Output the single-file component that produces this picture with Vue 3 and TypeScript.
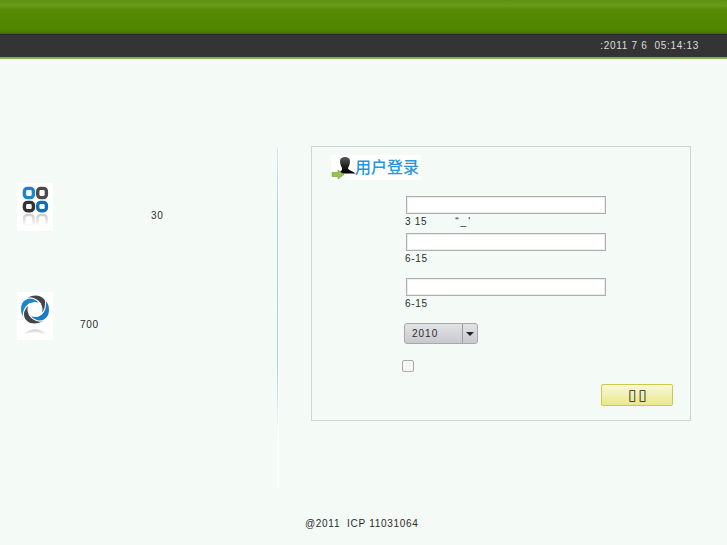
<script setup lang="ts">
const features = [
  { id: 'apps', text: '30', indent: 98 },
  { id: 'swirl', text: '700', indent: 27 },
]
const blades = [
  { angle: 90, color: '#454545' },
  { angle: 0, color: '#1b86cc' },
  { angle: 270, color: '#454545' },
  { angle: 180, color: '#1b7cc0' },
]
</script>

<template>
  <div class="page">
    <header class="top"></header>
    <div class="bar"><span>:2011 7 6&nbsp;&nbsp;05:14:13</span></div>
    <main class="main">
      <section class="left">
        <div v-for="f in features" :key="f.id" class="feature">
          <div class="thumb">
            <svg v-if="f.id === 'apps'" width="36" height="48" viewBox="0 0 36 48">
              <defs>
                <linearGradient id="fade-a" x1="0" y1="0" x2="0" y2="1">
                  <stop offset="0" stop-color="#cfcfcf" />
                  <stop offset="1" stop-color="#fff" />
                </linearGradient>
              </defs>
              <g fill="none" stroke-width="3.400">
                <rect x="7.400" y="5.400" width="9" height="9.200" rx="3" stroke="#1487cf" />
                <rect x="20.700" y="5.400" width="8.700" height="9.200" rx="3" stroke="#4a4a4a" />
                <rect x="7.400" y="19.400" width="9" height="8.400" rx="3" stroke="#333" />
                <rect x="20.700" y="19.400" width="8.700" height="8.400" rx="3" stroke="#0f6fb0" />
              </g>
              <g fill="none" stroke="url(#fade-a)" stroke-width="2.600">
                <rect x="7.200" y="32" width="9.300" height="11" rx="3" />
                <rect x="20.500" y="32" width="9" height="11" rx="3" />
              </g>
            </svg>
            <svg v-else width="36" height="48" viewBox="0 0 36 48">
              <defs>
                <linearGradient id="fade-b" x1="0" y1="0" x2="0" y2="1">
                  <stop offset="0" stop-color="#d4d4d4" />
                  <stop offset="1" stop-color="#fff" />
                </linearGradient>
              </defs>
              <g transform="translate(18 17.500)">
                <path
                  v-for="b in blades"
                  :key="b.angle"
                  :transform="`rotate(${b.angle})`"
                  :fill="b.color"
                  stroke="#fff"
                  stroke-width="1.100"
                  d="M6 -5 C2 -11 -5 -13.500 -10 -10 C-16 -6 -16 4 -10.500 10 C-11 4 -10 -1.500 -6.500 -4.500 C-3 -7.500 2 -7.500 6 -5Z"
                />
              </g>
              <path d="M6 44 C10 35 26 35 30 44 C25 39 11 39 6 44Z" fill="url(#fade-b)" />
            </svg>
          </div>
          <span class="num" :style="{ marginLeft: f.indent + 'px' }">{{ f.text }}</span>
        </div>
      </section>
      <div class="divider"></div>
      <section class="login">
        <div class="title">
          <svg width="25" height="25" viewBox="0 0 25 25">
            <defs>
              <linearGradient id="person" x1="0" y1="0" x2="0" y2="1">
                <stop offset="0" stop-color="#5c5c5c" />
                <stop offset="0.6" stop-color="#1a1a1a" />
                <stop offset="1" stop-color="#000" />
              </linearGradient>
            </defs>
            <path d="M9 6 C9 0.500 19 0.500 19 6 C19 9 18 11 17 13 C17 15 21 16 25 18.500 L7 18.500 C10 16.500 11.500 15 11 13 C10 11 9 9 9 6Z" fill="url(#person)" />
            <path d="M1 17.500 L7 17.500 L7 15 L13 19.500 L7 24 L7 21.500 L1 21.500Z" fill="#9ac04e" stroke="#6f9a35" stroke-width="0.600" />
          </svg>
          <span class="title-text">用户登录</span>
        </div>
        <div class="form">
          <input class="field" type="text" />
          <p class="hint">3 15<span class="gap">“_'</span></p>
          <input class="field" type="password" />
          <p class="hint">6-15</p>
          <input class="field later" type="password" />
          <p class="hint">6-15</p>
          <div class="select">
            <span class="val">2010</span>
            <span class="arrow"></span>
          </div>
          <input class="check" type="checkbox" />
        </div>
        <div class="actions"><button class="btn" type="button">▯▯</button></div>
      </section>
    </main>
    <footer class="foot">@2011&nbsp;&nbsp;ICP 11031064</footer>
  </div>
</template>

<style scoped>
.page {
  height: 545px;
  overflow: hidden;
  background: #f4fbf6;
  font-family: "Liberation Sans", sans-serif;
  color: #2a2a2a;
  font-size: 10px;
  letter-spacing: 0.7px;
}
.top {
  height: 34px;
  background: linear-gradient(#5f8f10 0, #6c9b1c 5px, #568a05 10px, #508500 30px, #4a7600 33px, #3c6000 34px);
}
.bar {
  height: 23px;
  box-sizing: border-box;
  background: #343434;
  border-top: 1px solid #2a2a2a;
  color: #ddd;
  text-align: right;
  padding-right: 28px;
  line-height: 22px;
  box-shadow: 0 2px 0 #8ab04a;
}
.main {
  display: flex;
  margin-top: 89px;
  height: 342px;
}
.left {
  width: 277px;
  padding: 37px 0 0 17px;
  box-sizing: border-box;
}
.feature {
  display: flex;
  align-items: center;
  height: 48px;
  margin-bottom: 61px;
}
.thumb {
  width: 36px;
  height: 48px;
  background: #fff;
  flex: none;
}
.thumb svg {
  display: block;
}
.num {
  position: relative;
  top: 8px;
}
.divider {
  width: 1px;
  margin-top: 2px;
  border-right: 1px solid #fff;
  background: linear-gradient(#d5e8f4, #9fcbe6 20%, #a8d0e8 65%, #fff 85%, #fff);
}
.login {
  width: 380px;
  height: 275px;
  margin-left: 32px;
  box-sizing: border-box;
  border: 1px solid #cfd6d0;
  position: relative;
}
.title {
  display: flex;
  align-items: center;
  width: 90px;
  height: 25px;
  margin: 8px 0 0 19px;
  background: #fff;
  color: #2a95d8;
  font-family: "Noto Sans CJK SC", sans-serif;
  font-size: 16px;
  letter-spacing: 0;
  line-height: 25px;
  white-space: nowrap;
}
.title-text {
  font-weight: 500;
  margin-top: -2px;
  margin-left: -1px;
}
.form {
  margin: 16px 0 0 93px;
}
.field {
  display: block;
  box-sizing: border-box;
  width: 200px;
  height: 18px;
  margin: 0 0 0 1px;
  padding: 0;
  border: 1px solid #aeaeae;
  box-shadow: inset 0 0 0 1px #ececec;
  background: #fff;
  outline: none;
}
.hint {
  margin: 0;
  height: 19px;
  line-height: 16px;
}
.gap {
  margin-left: 28px;
  letter-spacing: 2px;
}
.field.later {
  margin-top: 8px;
}
.select {
  display: flex;
  align-items: center;
  box-sizing: border-box;
  width: 74px;
  height: 21px;
  margin: 8px 0 0 -1px;
  border: 1px solid #a8a8ac;
  border-radius: 3px;
  background: linear-gradient(#e2e3e6, #c8c9ce);
  letter-spacing: 1px;
}
.val {
  width: 58px;
  padding-left: 7px;
  box-sizing: border-box;
  border-right: 1px solid #9a9a9e;
  line-height: 19px;
}
.arrow {
  margin-left: 3px;
  border-top: 4px solid #222;
  border-left: 4px solid transparent;
  border-right: 4px solid transparent;
}
.check {
  display: block;
  width: 12px;
  height: 12px;
  margin: 16px 0 0 -3px;
  appearance: none;
  background: #f6f6f6;
  border: 1px solid #aaa;
  border-radius: 2px;
}
.actions {
  position: absolute;
  right: 17px;
  bottom: 14px;
}
.btn {
  display: block;
  width: 72px;
  height: 22px;
  padding: 0 0 0 3px;
  border: 1px solid #c9c94f;
  border-radius: 2px;
  background: linear-gradient(#f9f8d4, #e8e88e);
  color: #222;
  font-family: "DejaVu Sans", sans-serif;
  font-size: 15px;
  line-height: 18px;
  letter-spacing: 2px;
}
.foot {
  margin-top: 29px;
  padding-left: 305px;
  line-height: 14px;
}
</style>
